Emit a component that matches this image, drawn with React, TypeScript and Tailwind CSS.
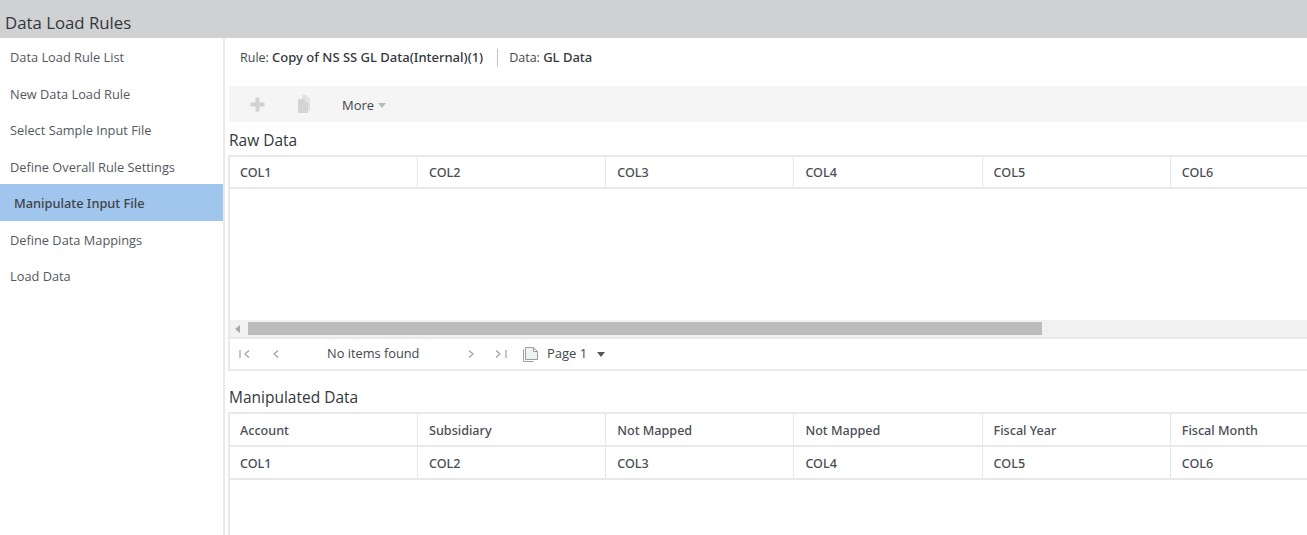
import React from "react";

const nav = [
  "Data Load Rule List",
  "New Data Load Rule",
  "Select Sample Input File",
  "Define Overall Rule Settings",
  "Manipulate Input File",
  "Define Data Mappings",
  "Load Data",
];

function Row({ cells, height }: { cells: string[]; height: string }) {
  return (
    <div className={`flex w-[1129px] shrink-0 border-b-2 border-[#e9e9e9] ${height}`}>
      {cells.map((c, i) => (
        <div
          key={c + i}
          className={`flex shrink-0 items-center pt-[3px] font-['Noto_Sans','Open_Sans',sans-serif] text-[12.6px] font-medium text-[#4a4d52] ${i > 0 ? "w-[188.2px] border-l border-[#e6e6e6] pl-[11px]" : "w-[187px] pl-[10px]"}`}
        >
          {c}
        </div>
      ))}
    </div>
  );
}

export default function App() {
  return (
    <div className="flex h-[535px] w-[1307px] flex-col overflow-hidden bg-white font-['Open_Sans','Noto_Sans',sans-serif] text-[#44474c]">
      <header className="flex h-[38px] shrink-0 items-end bg-[#d0d1d3] pb-[4px] pl-[5px] text-[16.8px] leading-[22px] text-[#33373c]">
        Data Load Rules
      </header>
      <div className="flex min-h-0 flex-1">
        <nav className="w-[225px] shrink-0 border-r-2 border-[#e9e9e9]">
          {nav.map((n, i) =>
            i === 4 ? (
              <div key={n} className="flex h-[36.5px] items-center bg-[#a0c6ee] pl-[14px] pt-[3px] font-['Noto_Sans','Open_Sans',sans-serif] text-[12.8px] font-medium text-[#3f4247]">
                {n}
              </div>
            ) : (
              <div key={n} className="flex h-[36.5px] items-center pl-[10px] pt-[3px] text-[12.8px] text-[#55585c]">
                {n}
              </div>
            )
          )}
        </nav>
        <main className="min-w-0 flex-1 pl-[3px]">
          <div className="flex h-[48px] items-center pb-[8px] pl-[12px] text-[12.5px]">
            <span>
              Rule: <span className="font-['Noto_Sans','Open_Sans',sans-serif] text-[13px] font-medium text-[#33373c]">Copy of NS SS GL Data(Internal)(1)</span>
            </span>
            <span className="ml-[14px] mr-[11px] h-[18px] w-px bg-[#c4c4c4]" />
            <span>
              Data: <span className="font-['Noto_Sans','Open_Sans',sans-serif] text-[13px] font-medium text-[#33373c]">GL Data</span>
            </span>
          </div>
          <div className="ml-[1px] flex h-[36px] items-center bg-[#f5f5f5] pl-[21px]">
            <svg width="15" height="15" viewBox="0 0 15 15" className="text-[#d2d2d2]">
              <path d="M5.500 0.500h4v5h5v4h-5v5h-4v-5h-5v-4h5z" fill="currentColor" />
            </svg>
            <svg width="14" height="18" viewBox="0 0 14 18" className="ml-[32px]">
              <path d="M5 0h4l4 4v12h-2V5L7 5H5z" fill="#e2e2e2" />
              <path d="M1 4h6l4 3v11H1z" fill="#d4d4d4" />
            </svg>
            <span className="ml-[31px] pt-[3px] text-[13px] text-[#44474c]">More</span>
            <svg width="8" height="5" viewBox="0 0 8 5" className="ml-[4px] mt-[2px] text-[#b9b9b9]">
              <path d="M0 0h8L4 5z" fill="currentColor" />
            </svg>
          </div>
          <h2 className="ml-[1px] mt-[8px] h-[25px] text-[15.5px] leading-[20px] text-[#33373c]">Raw Data</h2>
          <section className="h-[216px] overflow-hidden border-y-2 border-l-2 border-[#e9e9e9]">
            <Row cells={["COL1", "COL2", "COL3", "COL4", "COL5", "COL6"]} height="h-[32px]" />
            <div className="h-[131px]" />
            <div className="flex h-[17px] items-center bg-[#f1f1f1] pl-[5px]">
              <svg width="5" height="8" viewBox="0 0 5 8" className="text-[#a8a8a8]">
                <path d="M5 0v8L0 4z" fill="currentColor" />
              </svg>
              <div className="ml-[8px] h-[13px] w-[794px] bg-[#bcbcbc]" />
            </div>
            <div className="flex h-[32px] items-center border-t-2 border-[#e9e9e9] pl-[9px] text-[12.8px]">
              <svg width="42" height="10" viewBox="0 0 42 10" fill="none" stroke="#a0a0a0" strokeWidth="1.200">
                <path d="M1 1v8M10 1.500 6 5l4 3.500M39 1.500 35 5l4 3.500" />
              </svg>
              <span className="ml-[46px] w-[141px]">No items found</span>
              <svg width="40" height="10" viewBox="0 0 40 10" fill="none" stroke="#a0a0a0" strokeWidth="1.200">
                <path d="M1 1.500 5 5 1 8.500M28 1.500 32 5l-4 3.500M38 1v8" />
              </svg>
              <svg width="17" height="17" viewBox="0 0 17 17" className="ml-[14px]" fill="#eef2f0" stroke="#9aa0a0">
                <path d="M1.500 3.500v12h10" fill="none" />
                <path d="M3.500 1.500h8l4 4v8h-12z" />
                <path d="M11.500 1.500v4h4" fill="none" />
              </svg>
              <span className="ml-[8px] text-[13px]">Page 1</span>
              <svg width="8" height="5" viewBox="0 0 8 5" className="ml-[10px] text-[#55585c]">
                <path d="M0 0h8L4 5z" fill="currentColor" />
              </svg>
            </div>
          </section>
          <h2 className="ml-[1px] mt-[16px] h-[25px] text-[15.5px] leading-[20px] text-[#33373c]">Manipulated Data</h2>
          <section className="h-[200px] overflow-hidden border-l-2 border-t-2 border-[#e9e9e9]">
            <Row cells={["Account", "Subsidiary", "Not Mapped", "Not Mapped", "Fiscal Year", "Fiscal Month"]} height="h-[33px]" />
            <Row cells={["COL1", "COL2", "COL3", "COL4", "COL5", "COL6"]} height="h-[33px]" />
          </section>
        </main>
      </div>
    </div>
  );
}
